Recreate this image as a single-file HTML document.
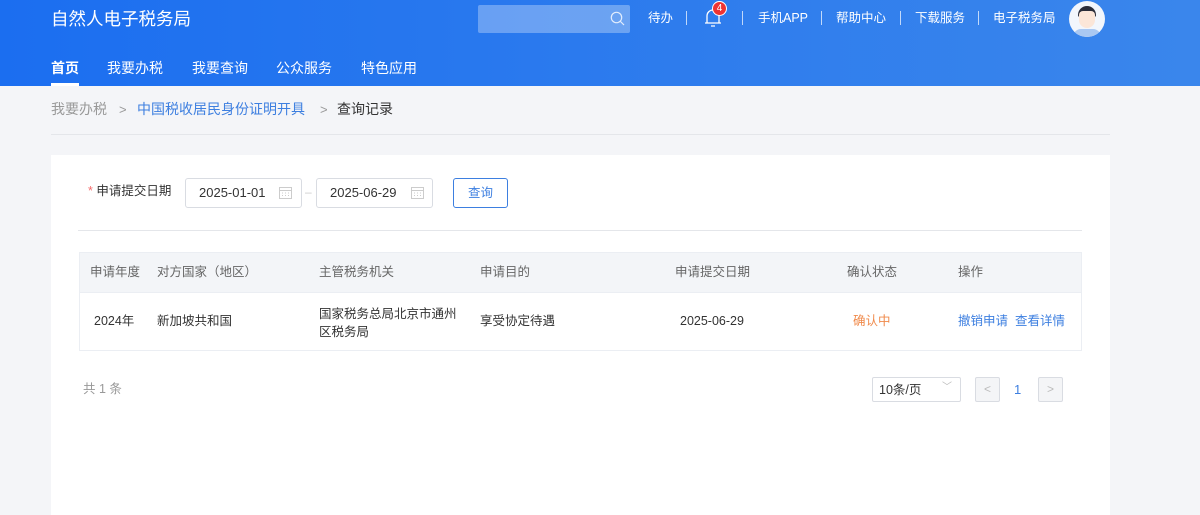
<!DOCTYPE html>
<html><head><meta charset="utf-8"><style>
*{margin:0;padding:0;box-sizing:border-box}
body{width:1200px;height:508px;overflow:hidden;background:#f4f5f8;font-family:"Liberation Sans","Noto Sans CJK SC",sans-serif;color:#333;position:relative}
.hd{position:absolute;left:0;top:0;width:1200px;height:86px;background:linear-gradient(90deg,#1b6ef0,#2f7ded 60%,#3a86ec)}
.a{position:absolute;white-space:nowrap;line-height:1.2}
.logo{left:51px;top:9px;font-size:17.5px;color:#fff}
.search{left:478px;top:5px;width:152px;height:28px;background:rgba(255,255,255,.3);border-radius:2px}
.tl{top:11px;font-size:12.5px;color:#fff}
.sep{top:11px;width:1px;height:14px;background:rgba(255,255,255,.7)}
.nav{top:60px;font-size:14px;color:#fff}
.bc{top:101px;font-size:14px}
.card{left:51px;top:155px;width:1059px;height:360px;background:#fff}
.inp{height:30px;border:1px solid #d9dce2;border-radius:3px;font-size:13px;color:#333;padding:6px 0 0 13px}
.t{font-size:12.5px}
</style></head><body>
<div class="hd"></div>
<div class="a logo">自然人电子税务局</div>
<div class="a search"><svg style="position:absolute;left:132px;top:6px" width="15" height="15" viewBox="0 0 15 15"><circle cx="6.5" cy="6.5" r="5.2" fill="none" stroke="#fff" stroke-width="1.2" opacity=".8"/><path d="M10.5 10.5L14 14" stroke="#fff" stroke-width="1.2" opacity=".8"/></svg></div>
<div class="a tl" style="left:648px">待办</div>
<div class="a sep" style="left:686px"></div>
<svg class="a" style="left:703px;top:7px" width="20" height="22" viewBox="0 0 20 22"><path d="M4 16V9a6 6 0 0 1 12 0v7M2 16h16M8 19h4" fill="none" stroke="#fff" stroke-width="1.3"/></svg>
<div class="a" style="left:712px;top:1px;width:15px;height:15px;border-radius:8px;background:#e33;color:#fff;font-size:10px;text-align:center;line-height:13px;border:1px solid #fff">4</div>
<div class="a sep" style="left:742px"></div>
<div class="a tl" style="left:758px">手机APP</div>
<div class="a sep" style="left:821px"></div>
<div class="a tl" style="left:836px">帮助中心</div>
<div class="a sep" style="left:900px"></div>
<div class="a tl" style="left:915px">下载服务</div>
<div class="a sep" style="left:978px"></div>
<div class="a tl" style="left:993px">电子税务局</div>
<div class="a" style="left:1069px;top:1px;width:36px;height:36px;border-radius:18px;background:#f2f6fc;overflow:hidden"><div style="position:absolute;left:9px;top:5px;width:18px;height:11px;background:#2a2d3a;border-radius:9px 9px 2px 2px"></div><div style="position:absolute;left:10px;top:10px;width:16px;height:17px;background:#fbe6d8;border-radius:4px 4px 8px 8px"></div><div style="position:absolute;left:4px;top:28px;width:28px;height:12px;background:#a9c8f2;border-radius:8px 8px 0 0"></div></div>
<div class="a nav" style="left:51px;font-weight:bold">首页</div>
<div class="a" style="left:51px;top:83px;width:28px;height:3px;background:#fff"></div>
<div class="a nav" style="left:107px">我要办税</div>
<div class="a nav" style="left:192px">我要查询</div>
<div class="a nav" style="left:276px">公众服务</div>
<div class="a nav" style="left:361px">特色应用</div>
<div class="a bc" style="left:51px;color:#999">我要办税</div>
<div class="a bc" style="left:119px;color:#999;font-size:13px;top:102px">&gt;</div>
<div class="a bc" style="left:137px;color:#3d7fe0">中国税收居民身份证明开具</div>
<div class="a bc" style="left:320px;color:#999;font-size:13px;top:102px">&gt;</div>
<div class="a bc" style="left:337px;color:#333">查询记录</div>
<div class="a" style="left:51px;top:134px;width:1059px;height:1px;background:#e4e6ea"></div>
<div class="a card"></div>
<div class="a" style="left:88px;top:184px;font-size:12.5px;color:#333"><span style="color:#f56c6c">*</span> 申请提交日期</div>
<div class="a inp" style="left:185px;top:178px;width:117px">2025-01-01</div>
<div class="a" style="left:305px;top:185px;color:#ccc;font-size:12px">–</div>
<div class="a inp" style="left:316px;top:178px;width:117px">2025-06-29</div>
<svg class="a" style="left:279px;top:186px" width="13" height="13"><rect x=".5" y="1.5" width="12" height="11" fill="none" stroke="#ccc"/><path d="M1 4.5h11M3 7h1M6 7h1M9 7h1M3 9.5h1M6 9.5h1M9 9.5h1" stroke="#ccc"/></svg>
<svg class="a" style="left:411px;top:186px" width="13" height="13"><rect x=".5" y="1.5" width="12" height="11" fill="none" stroke="#ccc"/><path d="M1 4.5h11M3 7h1M6 7h1M9 7h1M3 9.5h1M6 9.5h1M9 9.5h1" stroke="#ccc"/></svg>
<div class="a" style="left:453px;top:178px;width:55px;height:30px;border:1px solid #3d7fe0;border-radius:3px;color:#3d7fe0;font-size:12.5px;text-align:center;line-height:28px">查询</div>
<div class="a" style="left:78px;top:230px;width:1004px;height:1px;background:#e4e6ea"></div>
<div class="a" style="left:79px;top:252px;width:1003px;height:99px;border:1px solid #ebeef3"></div>
<div class="a" style="left:80px;top:253px;width:1001px;height:40px;background:#f3f5f8;border-bottom:1px solid #ebeef3"></div>
<div class="a t" style="top:265px;left:90px;color:#666">申请年度</div>
<div class="a t" style="top:265px;left:157px;color:#666">对方国家（地区）</div>
<div class="a t" style="top:265px;left:319px;color:#666">主管税务机关</div>
<div class="a t" style="top:265px;left:480px;color:#666">申请目的</div>
<div class="a t" style="top:265px;left:675px;color:#666">申请提交日期</div>
<div class="a t" style="top:265px;left:847px;color:#666">确认状态</div>
<div class="a t" style="top:265px;left:958px;color:#666">操作</div>
<div class="a t" style="top:314px;left:94px">2024年</div>
<div class="a t" style="top:314px;left:157px">新加坡共和国</div>
<div class="a t" style="top:305px;left:319px;line-height:18px">国家税务总局北京市通州<br>区税务局</div>
<div class="a t" style="top:314px;left:480px">享受协定待遇</div>
<div class="a t" style="top:314px;left:680px">2025-06-29</div>
<div class="a t" style="top:314px;left:853px;color:#f08a4b">确认中</div>
<div class="a t" style="top:314px;left:958px;color:#3d7fe0">撤销申请&nbsp;&nbsp;查看详情</div>
<div class="a t" style="top:382px;left:83px;color:#999">共 1 条</div>
<div class="a" style="left:872px;top:377px;width:89px;height:25px;border:1px solid #d9dce2;border-radius:2px;font-size:12.5px;padding:5px 0 0 6px">10条/页<span style="position:absolute;right:8px;top:4px;color:#bbb;font-size:10px">﹀</span></div>
<div class="a" style="left:975px;top:377px;width:25px;height:25px;border:1px solid #d9dce2;background:#f4f5f7;border-radius:2px;color:#bbb;font-size:12px;text-align:center;line-height:23px">&lt;</div>
<div class="a" style="left:1014px;top:382px;color:#3d7fe0;font-size:13px">1</div>
<div class="a" style="left:1038px;top:377px;width:25px;height:25px;border:1px solid #d9dce2;background:#f4f5f7;border-radius:2px;color:#bbb;font-size:12px;text-align:center;line-height:23px">&gt;</div>
</body></html>
